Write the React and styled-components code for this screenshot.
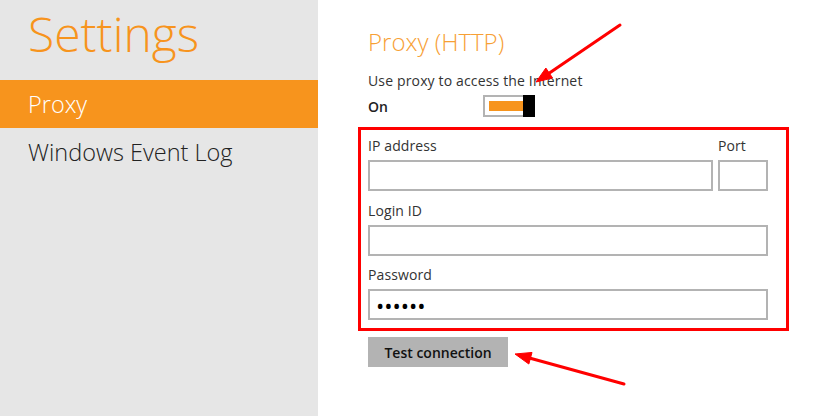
import React from 'react';
import styled, { createGlobalStyle } from 'styled-components';

const GlobalStyle = createGlobalStyle`
  html, body {
    margin: 0;
    padding: 0;
    background: #fff;
  }
  body {
    font-family: "Open Sans", "Liberation Sans", sans-serif;
  }
`;

const ORANGE = '#f7941d';

const Page = styled.div`
  position: relative;
  display: flex;
  width: 829px;
  height: 416px;
  overflow: hidden;
`;

const Sidebar = styled.nav`
  width: 318px;
  flex: none;
  background: #e6e6e6;
  display: flex;
  flex-direction: column;
`;

const Title = styled.h1`
  margin: 0;
  padding: 2px 0 0 28px;
  height: 80px;
  box-sizing: border-box;
  font-size: 48px;
  line-height: 64px;
  font-weight: 300;
  color: ${ORANGE};
`;

const MenuItem = styled.div`
  height: 48px;
  padding-left: 28px;
  display: flex;
  align-items: center;
  font-size: 23.5px;
  font-weight: 300;
  color: ${props => (props.active ? '#fff' : '#222')};
  background: ${props => (props.active ? ORANGE : 'transparent')};
`;

const Main = styled.main`
  flex: 1;
  padding: 26px 0 0 50px;
  display: flex;
  flex-direction: column;
  align-items: flex-start;
`;

const Heading = styled.h2`
  margin: 0;
  font-size: 24px;
  line-height: 32px;
  font-weight: 300;
  color: #f7a035;
`;

const Text = styled.div`
  margin-top: 13px;
  font-size: 14px;
  line-height: 19px;
  letter-spacing: 0.15px;
  color: #333;
`;

const ToggleRow = styled.div`
  display: flex;
  align-items: center;
  margin-top: 5px;
  height: 22px;
`;

const ToggleLabel = styled.span`
  width: 115px;
  font-size: 14px;
  font-weight: 600;
  color: #222;
`;

const Toggle = styled.div`
  display: flex;
  align-items: stretch;
  height: 22px;
`;

const Track = styled.div`
  width: 40px;
  height: 22px;
  box-sizing: border-box;
  border: 2px solid #b3b3b3;
  border-right: none;
  padding: 4px 0 4px 4px;
  background: #fff;
`;

const Fill = styled.div`
  height: 100%;
  background: ${ORANGE};
`;

const Thumb = styled.div`
  width: 12px;
  background: #000;
`;

const Fieldset = styled.div`
  margin: 10px 0 0 -10px;
  width: 431px;
  height: 204px;
  box-sizing: border-box;
  border: 3px solid #f00;
  padding: 6px 18px 0 7px;
  display: flex;
  flex-direction: column;
`;

const Row = styled.div`
  display: flex;
  gap: 5px;
  margin-top: ${props => props.gap || 0}px;
`;

const Field = styled.label`
  display: flex;
  flex-direction: column;
  flex: ${props => (props.fixed ? 'none' : 1)};
  width: ${props => (props.fixed ? `${props.fixed}px` : 'auto')};
`;

const Label = styled.span`
  font-size: 14px;
  line-height: 19px;
  letter-spacing: 0.1px;
  color: #333;
  margin-bottom: 5px;
`;

const Input = styled.input`
  display: block;
  width: 100%;
  height: 31px;
  box-sizing: border-box;
  border: 2px solid #b3b3b3;
  border-radius: 0;
  padding: 0 6px;
  font-family: "Open Sans", "Liberation Sans", sans-serif;
  font-size: ${props => (props.type === 'password' ? 22 : 16)}px;
  color: #000;
  background: #fff;
  outline: none;
`;

const Button = styled.button`
  margin-top: 6px;
  width: 140px;
  height: 30px;
  border: none;
  background: #b3b3b3;
  font-family: "Open Sans", "Liberation Sans", sans-serif;
  font-size: 14px;
  font-weight: 600;
  color: #111;
  padding: 0;
`;

const Annotations = styled.svg`
  position: absolute;
  left: 0;
  top: 0;
  pointer-events: none;
`;

const Arrow = ({ x1, y1, x2, y2 }) => {
  const dx = x2 - x1;
  const dy = y2 - y1;
  const len = Math.hypot(dx, dy);
  const ux = dx / len;
  const uy = dy / len;
  const hl = 16;
  const hw = 6;
  const bx = x2 - ux * hl;
  const by = y2 - uy * hl;
  const p1 = `${bx - uy * hw},${by + ux * hw}`;
  const p2 = `${bx + uy * hw},${by - ux * hw}`;
  return (
    <g fill="#f00" stroke="#f00">
      <line x1={x1} y1={y1} x2={bx + ux * 2} y2={by + uy * 2} strokeWidth="3" strokeLinecap="round" />
      <polygon points={`${x2},${y2} ${p1} ${p2}`} strokeWidth="1" strokeLinejoin="round" />
    </g>
  );
};

export default function App() {
  return (
    <Page>
      <GlobalStyle />
      <Sidebar>
        <Title>Settings</Title>
        <MenuItem active>Proxy</MenuItem>
        <MenuItem>Windows Event Log</MenuItem>
      </Sidebar>
      <Main>
        <Heading>Proxy (HTTP)</Heading>
        <Text>Use proxy to access the Internet</Text>
        <ToggleRow>
          <ToggleLabel>On</ToggleLabel>
          <Toggle>
            <Track><Fill /></Track>
            <Thumb />
          </Toggle>
        </ToggleRow>
        <Fieldset>
          <Row>
            <Field>
              <Label>IP address</Label>
              <Input type="text" readOnly />
            </Field>
            <Field fixed={50}>
              <Label>Port</Label>
              <Input type="text" readOnly />
            </Field>
          </Row>
          <Row gap={10}>
            <Field>
              <Label>Login ID</Label>
              <Input type="text" readOnly />
            </Field>
          </Row>
          <Row gap={9}>
            <Field>
              <Label>Password</Label>
              <Input type="password" defaultValue="secret" readOnly />
            </Field>
          </Row>
        </Fieldset>
        <Button>Test connection</Button>
      </Main>
      <Annotations width="829" height="416">
        <Arrow x1={620} y1={25} x2={536} y2={82} />
        <Arrow x1={624} y1={384} x2={515} y2={354} />
      </Annotations>
    </Page>
  );
}
